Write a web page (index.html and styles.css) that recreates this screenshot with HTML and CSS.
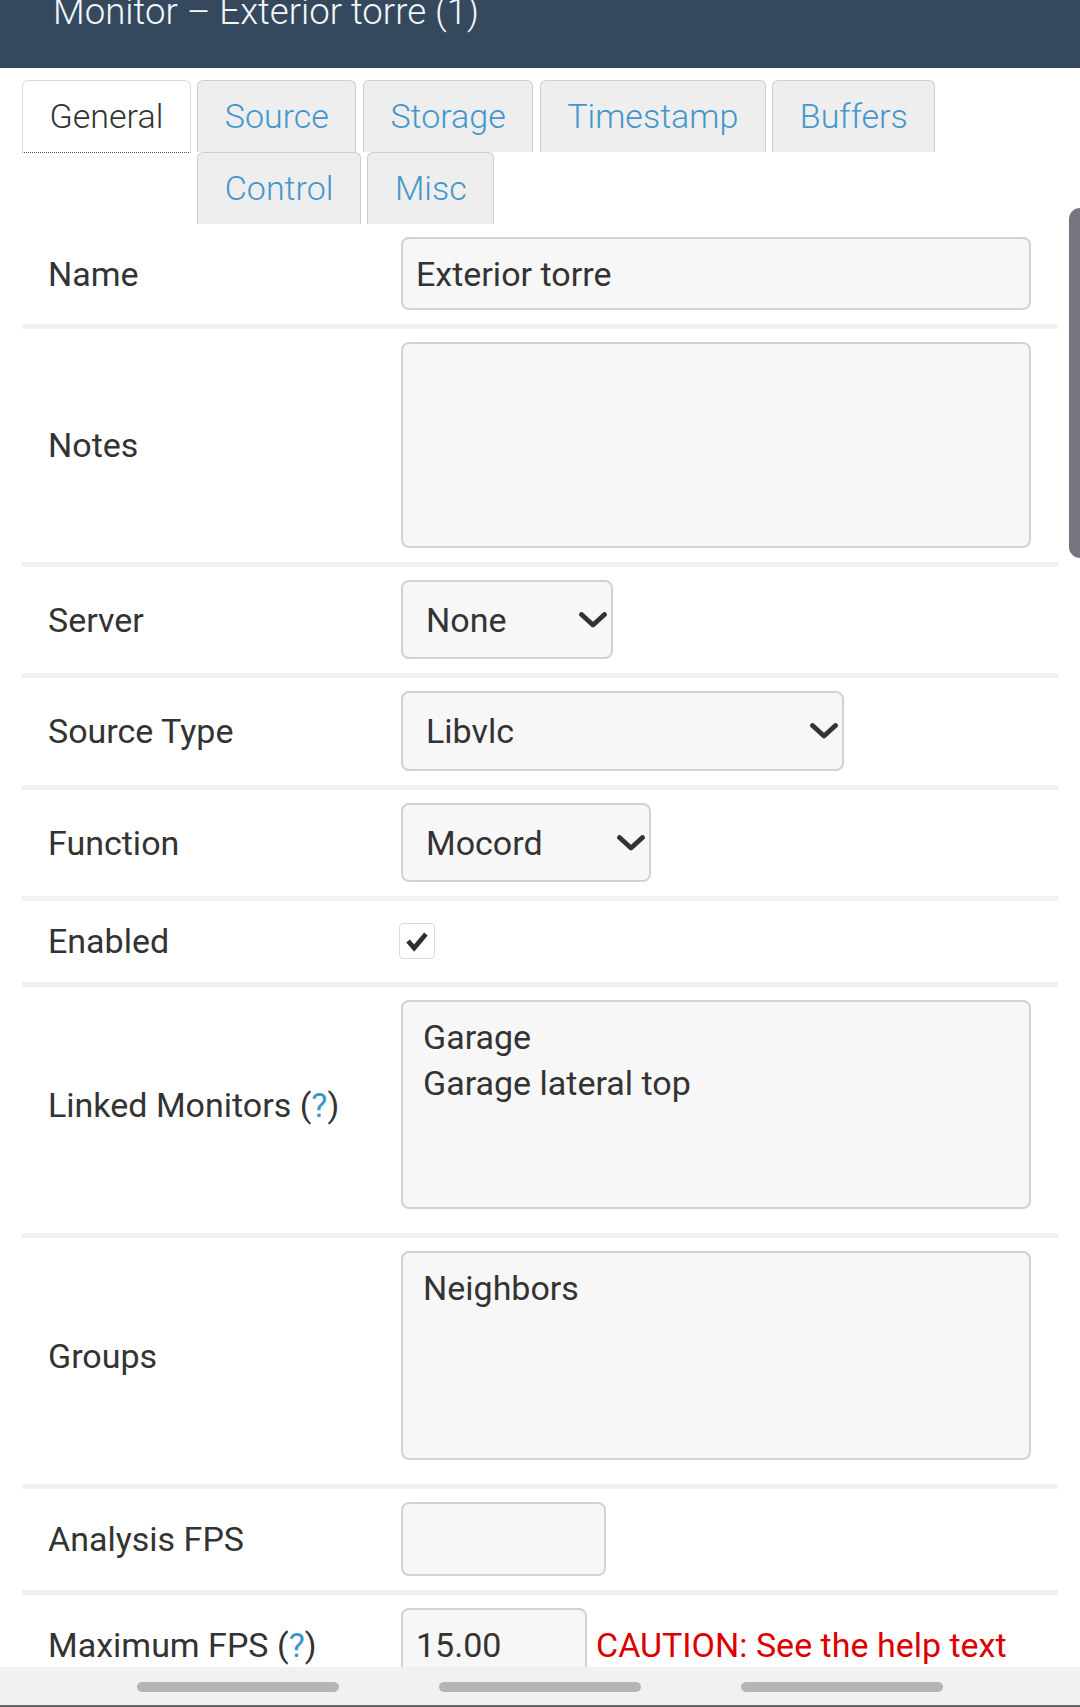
FILE: index.html
```html
<!DOCTYPE html>
<html lang="en">
<head>
<meta charset="utf-8">
<title>Monitor – Exterior torre (1)</title>
<link rel="stylesheet" href="styles.css">
</head>
<body>
<header class="page-header">
  <h1 class="page-title">Monitor – Exterior torre (1)</h1>
</header>
<main class="content">
  <ul class="tabs">
    <li class="tab active"><a>General</a></li>
    <li class="tab"><a>Source</a></li>
    <li class="tab"><a>Storage</a></li>
    <li class="tab"><a>Timestamp</a></li>
    <li class="tab"><a>Buffers</a></li>
    <li class="tab"><a>Control</a></li>
    <li class="tab"><a>Misc</a></li>
  </ul>
  <div class="form">
    <div class="row">
      <div class="label">Name</div>
      <div class="value"><input class="field field-name" type="text" value="Exterior torre"></div>
    </div>
    <div class="row">
      <div class="label">Notes</div>
      <div class="value"><textarea class="field field-notes"></textarea></div>
    </div>
    <div class="row">
      <div class="label">Server</div>
      <div class="value">
        <div class="select select-server"><span>None</span>
          <svg class="chevron" viewBox="0 0 28 16"><path d="M2.5 2.5 L14 13 L25.5 2.5"/></svg>
        </div>
      </div>
    </div>
    <div class="row">
      <div class="label">Source Type</div>
      <div class="value">
        <div class="select select-type"><span>Libvlc</span>
          <svg class="chevron" viewBox="0 0 28 16"><path d="M2.5 2.5 L14 13 L25.5 2.5"/></svg>
        </div>
      </div>
    </div>
    <div class="row">
      <div class="label">Function</div>
      <div class="value">
        <div class="select select-function"><span>Mocord</span>
          <svg class="chevron" viewBox="0 0 28 16"><path d="M2.5 2.5 L14 13 L25.5 2.5"/></svg>
        </div>
      </div>
    </div>
    <div class="row">
      <div class="label">Enabled</div>
      <div class="value">
        <span class="checkbox"><svg viewBox="0 0 36 36"><path d="M8.5 18 L15 25.5 L27.5 10.5"/></svg></span>
      </div>
    </div>
    <div class="row row-list">
      <div class="label">Linked Monitors (<a class="help">?</a>)</div>
      <div class="value">
        <div class="listbox">
          <div class="option">Garage</div>
          <div class="option">Garage lateral top</div>
        </div>
      </div>
    </div>
    <div class="row row-list">
      <div class="label">Groups</div>
      <div class="value">
        <div class="listbox">
          <div class="option">Neighbors</div>
        </div>
      </div>
    </div>
    <div class="row">
      <div class="label">Analysis FPS</div>
      <div class="value"><input class="field field-analysis" type="text" value=""></div>
    </div>
    <div class="row">
      <div class="label">Maximum FPS (<a class="help">?</a>)</div>
      <div class="value"><input class="field field-max" type="text" value="15.00"><span class="caution">CAUTION: See the help text</span></div>
    </div>
  </div>
</main>
<div class="scroll-thumb"></div>
<nav class="nav-bar">
  <span class="pill"></span>
  <span class="pill"></span>
  <span class="pill"></span>
</nav>
</body>
</html>
```

FILE: styles.css
```css
html, body {
  margin: 0;
  padding: 0;
  background: #fff;
}
body {
  font-family: Roboto, "Noto Sans", "Liberation Sans", sans-serif;
  font-size: 34px;
  color: #333;
  overflow: hidden;
  height: 1707px;
}
.page-header {
  height: 68px;
  background: #34495e;
  overflow: hidden;
}
.page-title {
  margin: -6px 0 0 53px;
  font-size: 36.6px;
  line-height: 36px;
  font-weight: 300;
  color: #f4f6f8;
}
.content {
  padding: 0 22px;
}
.tabs {
  list-style: none;
  margin: 12px 0 0;
  padding: 0;
  display: flow-root;
}
.tab {
  float: left;
  height: 71px;
  margin-right: 6.5px;
  border: 1px solid #cdcdcd;
  border-bottom: none;
  border-radius: 6px 6px 0 0;
  background: #eeeeee;
}
.tab a {
  display: block;
  padding: 0 26.5px;
  line-height: 71px;
  font-weight: 300;
  color: #4396cc;
}
.tab.active {
  background: #fff;
  border-color: #dcdcdc;
  border-bottom: 1px dotted #555;
}
.tab.active a {
  color: #333;
}
.form {
  display: flex;
  flex-direction: column;
}
.row {
  display: grid;
  grid-template-columns: 379px 1fr;
  align-items: center;
  padding: 13px 0 14px;
  border-bottom: 5px solid #f1f1f1;
}
.row-list {
  padding-bottom: 24px;
}
.label {
  padding-left: 26px;
  line-height: 54px;
  white-space: nowrap;
}
.help {
  color: #3a95cf;
}
.value {
  display: flex;
  align-items: center;
}
.field {
  box-sizing: border-box;
  font-family: inherit;
  font-size: 34px;
  color: #333;
  background: #f7f7f7;
  border: 2px solid #d2d2d2;
  border-radius: 8px;
  padding: 0 13px;
  margin: 0;
  outline: none;
}
.field-name {
  width: 630px;
  height: 73px;
}
.field-notes {
  display: block;
  width: 630px;
  height: 206px;
  resize: none;
}
.field-analysis {
  width: 205px;
  height: 74px;
}
.field-max {
  width: 186px;
  height: 74px;
}
.select {
  box-sizing: border-box;
  height: 79px;
  display: flex;
  align-items: center;
  justify-content: space-between;
  padding: 0 4px 0 23px;
  background: #f7f7f7;
  border: 2px solid #d2d2d2;
  border-radius: 8px;
}
.select-server { width: 212px; }
.select-type { width: 443px; height: 80px; }
.select-function { width: 250px; }
.chevron {
  width: 28px;
  height: 16px;
  fill: none;
  stroke: #333;
  stroke-width: 4.8;
  stroke-linecap: round;
  stroke-linejoin: round;
}
.checkbox {
  box-sizing: border-box;
  width: 36px;
  height: 36px;
  border: 1px solid #dadada;
  border-radius: 4px;
  background: #fff;
  margin-left: -2px;
}
.checkbox svg {
  display: block;
  width: 34px;
  height: 34px;
  fill: none;
  stroke: #2e2e35;
  stroke-width: 5;
}
.listbox {
  box-sizing: border-box;
  width: 630px;
  height: 209px;
  padding: 12px 20px;
  background: #f7f7f7;
  border: 2px solid #d2d2d2;
  border-radius: 8px;
}
.option {
  line-height: 46px;
}
.caution {
  margin-left: 9px;
  color: #dd0000;
  white-space: nowrap;
}
.scroll-thumb {
  position: fixed;
  right: 0;
  top: 208px;
  width: 11px;
  height: 350px;
  background: #76757f;
  border-radius: 12px 0 0 12px;
}
.nav-bar {
  position: fixed;
  left: 0;
  right: 0;
  bottom: 0;
  height: 40px;
  box-sizing: border-box;
  background: #f1f1f1;
  border-bottom: 2px solid #666;
  display: flex;
  justify-content: center;
  gap: 100px;
  padding-top: 15px;
}
.pill {
  width: 202px;
  height: 10px;
  border-radius: 5px;
  background: #b5b5b5;
}
```
